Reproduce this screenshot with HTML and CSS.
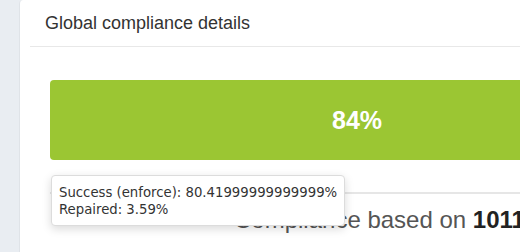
FILE: index.html
```html
<!DOCTYPE html>
<html lang="en">
<head>
    <meta charset="UTF-8">
    <meta name="viewport" content="width=device-width, initial-scale=1.0">
    <title>Global compliance</title>
    <link rel="stylesheet" href="styles.css">
</head>
<body>
    <div class="page">
        <div class="card">
            <div class="card-header">
                <h3>Global compliance details</h3>
            </div>
            <div class="card-body">
                <div class="progress-wrap">
                    <div class="progress">
                        <div class="bar bar-success" style="width: 84%">84%</div>
                        <div class="bar bar-repaired" style="width: 4%"></div>
                        <div class="bar bar-error" style="width: 12%"></div>
                    </div>
                    <div class="tooltip">
                        Success (enforce): 80.41999999999999%<br>
                        Repaired: 3.59%
                    </div>
                </div>
                <div class="summary">
                    <p>Compliance based on <b>1011</b> nodes</p>
                </div>
            </div>
        </div>
    </div>
</body>
</html>
```

FILE: styles.css
```css
body {
    margin: 0;
    padding: 0;
    background-color: #e9edf2;
    font-family: "Liberation Sans", Arial, sans-serif;
    color: #333;
    overflow: hidden;
}
.page {
    padding-left: 19px;
}
.card {
    width: 791px;
    min-height: 300px;
    background-color: #fff;
    border-left: 1px solid #dfe3e8;
    border-radius: 4px 0 0 0;
}
.card-header {
    margin: 0 10px;
    padding: 13px 15px 12px;
    border-bottom: 1px solid #e8e8e8;
}
.card-header h3 {
    margin: 0;
    font-size: 18px;
    font-weight: normal;
    line-height: 21px;
    color: #333;
}
.card-body {
    padding: 33px 30px 0;
}
.progress-wrap {
    position: relative;
}
.progress {
    display: flex;
    height: 80px;
    border-radius: 4px;
    overflow: hidden;
}
.bar {
    display: flex;
    align-items: center;
    justify-content: center;
    color: #fff;
    font-size: 25px;
    font-weight: bold;
}
.bar-success {
    background-color: #9bc633;
}
.bar-repaired {
    background-color: #3fa1d8;
}
.bar-error {
    background-color: #da291c;
}
.tooltip {
    position: absolute;
    top: 95px;
    left: 1px;
    padding: 8px 7px 7px;
    background-color: #fff;
    border: 1px solid #dcdcdc;
    border-radius: 4px;
    box-shadow: 0 3px 10px rgba(0, 0, 0, 0.15);
    font-family: "DejaVu Sans", sans-serif;
    font-size: 13.25px;
    line-height: 17px;
    color: #333;
    white-space: nowrap;
    z-index: 2;
}
.summary {
    margin-top: 32px;
    border-top: 2px solid #e6e6e6;
    padding-top: 12px;
}
.summary p {
    margin: 0;
    text-align: center;
    font-size: 24px;
    color: #555;
}
.summary b {
    color: #222;
}
```
